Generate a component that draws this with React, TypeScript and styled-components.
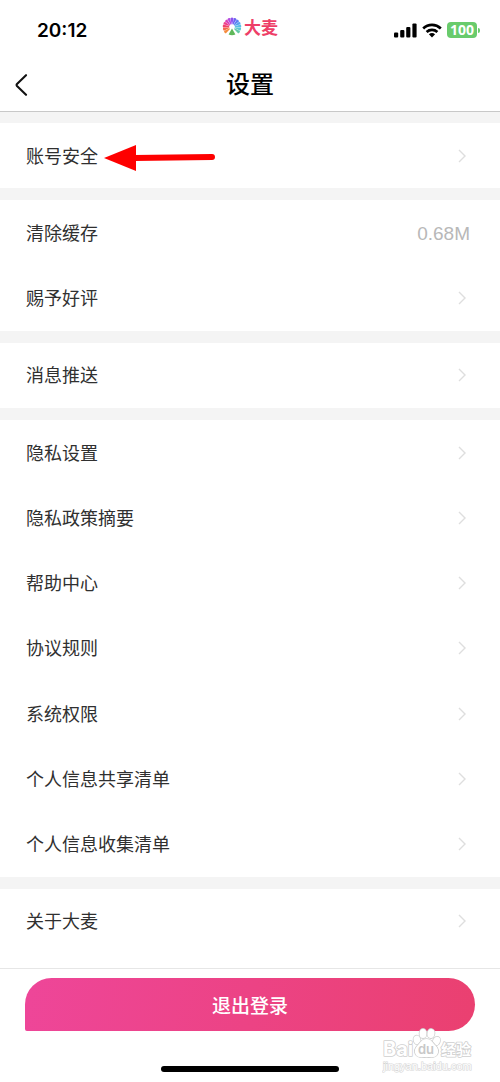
import React from "react";
import styled, { createGlobalStyle } from "styled-components";

const GlobalStyle = createGlobalStyle`
  *, *::before, *::after { box-sizing: border-box; }
  body {
    margin: 0;
    background: #fff;
    color: #303030;
    font-family: "Noto Sans CJK SC", "Noto Sans", sans-serif;
  }
  button { font: inherit; border: 0; margin: 0; cursor: pointer; }
`;

const Screen = styled.div`
  min-height: 100vh;
  display: flex;
  flex-direction: column;
`;

const StatusBar = styled.div`
  display: grid;
  grid-template-columns: 1fr auto 1fr;
  align-items: center;
  height: 60px;
  padding: 0 20px 0 37px;
`;

const Clock = styled.time`
  padding-top: 2px;
  font: 600 19px/24px Inter, sans-serif;
  color: #000;
`;

const Brand = styled.div`
  display: flex;
  align-items: center;
  gap: 2px;
  padding: 0 0 6px;
  margin-right: 17px;
  color: #ee3f68;
  font-size: 17px;
  font-weight: 700;
  line-height: 20px;
`;

const StatusIcons = styled.div`
  display: flex;
  align-items: center;
  justify-content: flex-end;
  gap: 5px;
`;

const BatteryBox = styled.div`
  display: flex;
  align-items: center;
  gap: 1px;
  &::after {
    content: "";
    width: 2px;
    height: 5px;
    border-radius: 0 2px 2px 0;
    background: #69cb6c;
  }
`;

const BatteryLevel = styled.span`
  width: 30px;
  height: 16px;
  border-radius: 4px;
  background: #69cb6c;
  color: #fff;
  font: 700 14px/16px "Noto Sans", sans-serif;
  text-align: center;
`;

const TitleBar = styled.header`
  display: grid;
  grid-template-columns: 48px 1fr 48px;
  align-items: center;
  height: 52px;
  padding-bottom: 5px;
  border-bottom: 1px solid #c8c8c8;
`;

const BackButton = styled.button`
  display: flex;
  padding: 4px 0 0 14px;
  background: none;
`;

const Title = styled.h1`
  margin: 0;
  color: #000;
  font-size: 24px;
  font-weight: 500;
  line-height: 32px;
  text-align: center;
`;

const Settings = styled.main`
  flex: 1;
  display: flex;
  flex-direction: column;
  gap: 12px;
  padding-top: 11px;
  background: #f4f4f4;
`;

const Group = styled.section<{ $rows: number; $last: boolean }>`
  flex: ${(p) => p.$rows} 0 auto;
  display: flex;
  flex-direction: column;
  padding-bottom: ${(p) => (p.$last ? 14 : 0)}px;
  background: #fff;
`;

const Row = styled.button`
  position: relative;
  flex: 1 0 auto;
  display: flex;
  align-items: center;
  justify-content: space-between;
  min-height: 65px;
  padding: 0 34px 0 26px;
  background: none;
  color: #303030;
  text-align: left;
`;

const ValueRow = styled(Row)`
  padding-right: 30px;
`;

const Label = styled.span`
  padding-bottom: 2px;
  font-size: 18px;
  line-height: 26px;
`;

const Value = styled.span`
  padding-top: 2px;
  color: #b8b8b8;
  font: 400 19px/24px "Liberation Sans", sans-serif;
`;

const Pointer = styled.svg`
  position: absolute;
  left: 104px;
  top: 21px;
`;

const Footer = styled.footer`
  position: relative;
  display: flex;
  flex-direction: column;
  gap: 35px;
  padding: 9px 25px 10px;
  border-top: 1px solid #e6e6e6;
  background: #fff;
`;

const LogoutButton = styled.button`
  height: 53px;
  border-radius: 27px 27px 27px 2px;
  background: linear-gradient(100deg, #ee4699, #ea4070);
  color: #fff;
  font-size: 19px;
  font-weight: 500;
  line-height: 28px;
`;

const HomeIndicator = styled.div`
  align-self: center;
  width: 178px;
  height: 6px;
  border-radius: 3px;
  background: #000;
`;

const Watermark = styled.svg`
  position: absolute;
  right: 24px;
  bottom: 6px;
`;

const petals = [
  "#f58c3c", "#f4694a", "#f0436a", "#ee3f8c", "#d843b8", "#b44be0", "#8d52ee",
  "#6c62f2", "#5a80f2", "#54a2ee", "#58bfe6", "#5cc8d2", "#62c9a8",
];

function FanLogo() {
  return (
    <svg width="20" height="20" viewBox="-10 -10 20 20" aria-hidden="true">
      {petals.map((color, i) => (
        <path
          key={color}
          d="M-.4 -2.8L-1.5 -8.8Q0 -10 1.5 -8.8L.4 -2.8Z"
          fill={color}
          transform={`rotate(${-126 + i * 21})`}
        />
      ))}
      <path d="M0 1.500L3.400 7.600Q0 9-3.400 7.600Z" fill="#5fb85a" />
    </svg>
  );
}

function Signal() {
  return (
    <svg width="23" height="15" viewBox="0 0 23 15" aria-label="信号">
      <rect x="0" y="9.5" width="4.2" height="5" rx="1.1" />
      <rect x="6.2" y="7" width="4.2" height="7.5" rx="1.1" />
      <rect x="12.2" y="4" width="4.2" height="10.5" rx="1.1" />
      <rect x="18.4" y="0.5" width="4.2" height="14" rx="1.1" />
    </svg>
  );
}

function Wifi() {
  return (
    <svg width="20" height="15" viewBox="0 0 20 15" fill="none" stroke="#000" strokeWidth="2.7" aria-label="无线网络">
      <path d="M1.200 5.400C6.200 .7 13.800 .7 18.800 5.400" />
      <path d="M4.600 9C7.700 6.200 12.300 6.200 15.400 9" />
      <path d="M10 14.400L6.900 11.300Q10 8.900 13.100 11.300Z" fill="#000" stroke="none" />
    </svg>
  );
}

function Chevron() {
  return (
    <svg width="8" height="14" viewBox="0 0 8 14" fill="none" stroke="#dedede" strokeWidth="1.4" aria-hidden="true">
      <path d="M1 1L7 7L1 13" />
    </svg>
  );
}

function BaiduMark() {
  return (
    <Watermark width="94" height="48" viewBox="0 0 94 48" role="img" aria-label="Baidu 经验">
      <g fill="#fff" stroke="#cfcfcf" strokeWidth="1.6" paintOrder="stroke" strokeLinejoin="round">
        <text x="1" y="28" fontFamily="Inter, sans-serif" fontSize="20" fontWeight="700">Bai</text>
        <text x="59" y="27" fontFamily="Noto Sans CJK SC, sans-serif" fontSize="15" fontWeight="700">经验</text>
        <ellipse cx="35" cy="12" rx="3.4" ry="4.4" transform="rotate(-14 35 12)" />
        <ellipse cx="41" cy="5.500" rx="3.5" ry="4.6" />
        <ellipse cx="49" cy="5.500" rx="3.5" ry="4.6" transform="rotate(8 49 5.500)" />
        <ellipse cx="54.500" cy="13" rx="3.4" ry="4.4" transform="rotate(24 54.500 13)" />
        <path d="M44.500 11C49 11 50 14 53 17C56 20 57 23 55.500 26C53.500 30.500 48 29 44.500 29C41 29 35.500 30.500 33.500 26C32 23 33 20 36 17C39 14 40 11 44.500 11Z" />
      </g>
      <text x="44" y="26" textAnchor="middle" fill="#c8c8c8" fontFamily="Inter, sans-serif" fontSize="13" fontWeight="600">du</text>
      <text x="1" y="42" fill="#fff" stroke="#d6d6d6" strokeWidth="1.2" paintOrder="stroke" fontFamily="Liberation Sans, sans-serif" fontSize="11">
        jingyan.baidu.com
      </text>
    </Watermark>
  );
}

type Item = { label: string; value?: string; marked?: boolean };

const groups: Item[][] = [
  [{ label: "账号安全", marked: true }],
  [{ label: "清除缓存", value: "0.68M" }, { label: "赐予好评" }],
  [{ label: "消息推送" }],
  [
    { label: "隐私设置" },
    { label: "隐私政策摘要" },
    { label: "帮助中心" },
    { label: "协议规则" },
    { label: "系统权限" },
    { label: "个人信息共享清单" },
    { label: "个人信息收集清单" },
  ],
  [{ label: "关于大麦" }],
];

function SettingRow({ label, value, marked }: Item) {
  if (value) {
    return (
      <ValueRow type="button">
        <Label>{label}</Label>
        <Value>{value}</Value>
      </ValueRow>
    );
  }
  return (
    <Row type="button">
      <Label>{label}</Label>
      <Chevron />
      {marked && (
        <Pointer width="112" height="28" viewBox="0 0 112 28" aria-hidden="true">
          <path d="M30 14L108 13" stroke="#fe0000" strokeWidth="6" strokeLinecap="round" />
          <path d="M0 14L32 1V27Z" fill="#fe0000" />
        </Pointer>
      )}
    </Row>
  );
}

export default function App() {
  return (
    <Screen>
      <GlobalStyle />
      <StatusBar>
        <Clock>20:12</Clock>
        <Brand>
          <FanLogo />
          大麦
        </Brand>
        <StatusIcons>
          <Signal />
          <Wifi />
          <BatteryBox>
            <BatteryLevel>100</BatteryLevel>
          </BatteryBox>
        </StatusIcons>
      </StatusBar>
      <TitleBar>
        <BackButton type="button" aria-label="返回">
          <svg width="14" height="22" viewBox="0 0 14 22" fill="none" stroke="#111" strokeWidth="2.1" strokeLinecap="round" strokeLinejoin="round">
            <path d="M12 1.200L3 10Q2.200 11 3 12L12 20.800" />
          </svg>
        </BackButton>
        <Title>设置</Title>
      </TitleBar>
      <Settings>
        {groups.map((items, i) => (
          <Group key={items[0].label} $rows={items.length} $last={i === groups.length - 1}>
            {items.map((item) => (
              <SettingRow key={item.label} {...item} />
            ))}
          </Group>
        ))}
      </Settings>
      <Footer>
        <LogoutButton type="button">退出登录</LogoutButton>
        <HomeIndicator />
        <BaiduMark />
      </Footer>
    </Screen>
  );
}
